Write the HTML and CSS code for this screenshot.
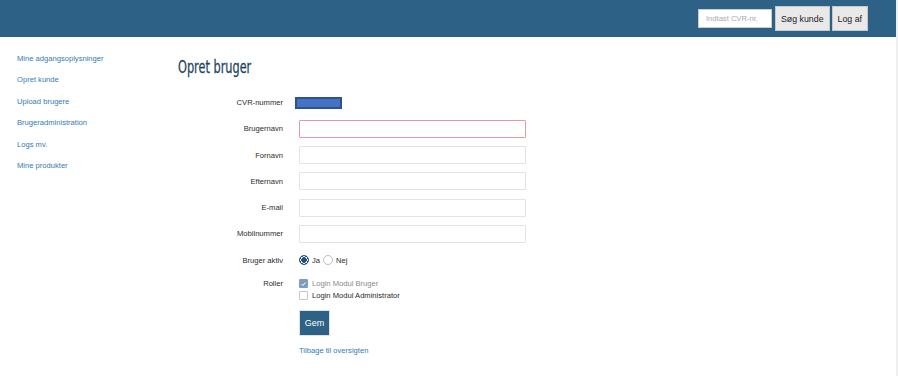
FILE: index.html
```html
<!DOCTYPE html>
<html lang="da">
<head>
<meta charset="utf-8">
<title>Opret bruger</title>
<link rel="stylesheet" href="styles.css">
</head>
<body>
<header class="topbar">
  <input class="cvr-search" type="text" placeholder="Indtast CVR-nr.">
  <button class="top-btn">Søg kunde</button>
  <button class="top-btn">Log af</button>
</header>
<div class="layout">
  <nav class="sidebar">
    <a href="#">Mine adgangsoplysninger</a>
    <a href="#">Opret kunde</a>
    <a href="#">Upload brugere</a>
    <a href="#">Brugeradministration</a>
    <a href="#">Logs mv.</a>
    <a href="#">Mine produkter</a>
  </nav>
  <main class="content">
    <h1 class="title">Opret bruger</h1>
    <div class="row">
      <label class="lbl">CVR-nummer</label>
      <div class="field"><span class="cvr-value"></span></div>
    </div>
    <div class="row">
      <label class="lbl">Brugernavn</label>
      <div class="field"><input class="txt txt-error" type="text"></div>
    </div>
    <div class="row">
      <label class="lbl">Fornavn</label>
      <div class="field"><input class="txt" type="text"></div>
    </div>
    <div class="row">
      <label class="lbl">Efternavn</label>
      <div class="field"><input class="txt" type="text"></div>
    </div>
    <div class="row">
      <label class="lbl">E-mail</label>
      <div class="field"><input class="txt" type="text"></div>
    </div>
    <div class="row">
      <label class="lbl">Mobilnummer</label>
      <div class="field"><input class="txt" type="text"></div>
    </div>
    <div class="row">
      <label class="lbl">Bruger aktiv</label>
      <div class="field radios">
        <span class="radio checked"></span><span class="opt">Ja</span>
        <span class="radio"></span><span class="opt">Nej</span>
      </div>
    </div>
    <div class="row row-roles">
      <label class="lbl lbl-top">Roller</label>
      <div class="field roles">
        <div class="role disabled"><span class="check checked"><svg viewBox="0 0 10 10" width="10" height="10"><path d="M2.3 5.2 L4.2 7.1 L7.8 2.9" fill="none" stroke="#fff" stroke-width="1.4"/></svg></span><span>Login Modul Bruger</span></div>
        <div class="role"><span class="check"></span><span>Login Modul Administrator</span></div>
      </div>
    </div>
    <div class="actions">
      <button class="save">Gem</button>
      <a href="#" class="back">Tilbage til oversigten</a>
    </div>
  </main>
</div>
</body>
</html>
```

FILE: styles.css
```css
html {
  background: #efefef;
}
body {
  margin: 0 2px 0 0;
  background: #fff;
  min-height: 376px;
  font-family: "Liberation Sans", Arial, sans-serif;
  font-size: 7.6px;
  color: #2b2b2b;
}
.topbar {
  height: 37px;
  background: #2d6185;
  display: flex;
  align-items: center;
  justify-content: flex-end;
  padding-right: 28px;
  gap: 2px;
}
.cvr-search {
  width: 74px;
  height: 19px;
  box-sizing: border-box;
  border: 1px solid #ccc;
  background: #fff;
  padding: 0 7px;
  margin-right: 1px;
  font-family: "Liberation Sans", Arial, sans-serif;
  font-size: 7.6px;
  color: #555;
}
.cvr-search::placeholder {
  color: #aaa;
}
.top-btn {
  height: 25px;
  box-sizing: border-box;
  border: 1px solid #c8c8c8;
  background: #e9e9e9;
  color: #222;
  font-family: "Liberation Sans", Arial, sans-serif;
  font-size: 8.8px;
  padding: 0 5px;
}
.layout {
  display: flex;
}
.sidebar {
  width: 161px;
  box-sizing: border-box;
  padding: 11px 0 0 17px;
  display: flex;
  flex-direction: column;
}
.sidebar a {
  color: #337ab7;
  text-decoration: none;
  line-height: 21.4px;
}
.content {
  padding-top: 16px;
  padding-left: 17px;
  flex: 1;
}
.title {
  margin: 0 0 12.5px 0;
  font-family: "DejaVu Sans Condensed", "DejaVu Sans", sans-serif;
  font-weight: normal;
  font-size: 18.5px;
  line-height: 28px;
  color: #1c455c;
  transform: scaleX(0.68);
  transform-origin: left center;
  -webkit-text-stroke: 0.3px #1c455c;
}
.row {
  display: flex;
  align-items: center;
  height: 18px;
  margin-bottom: 8.3px;
}
.lbl {
  width: 105px;
  text-align: right;
  margin-right: 16px;
}
.field {
  display: flex;
  align-items: center;
}
.cvr-value {
  display: block;
  width: 47px;
  height: 12px;
  box-sizing: border-box;
  background: #4472c4;
  border: 2px solid #2f528f;
  margin-left: -4px;
}
.txt {
  width: 227px;
  height: 18px;
  box-sizing: border-box;
  border: 1px solid #e3e3e3;
  border-radius: 1px;
  background: #fff;
  margin: 0;
  padding: 0 6px;
}
.txt-error {
  border-color: #e39aa4;
}
.radio {
  width: 10px;
  height: 10px;
  box-sizing: border-box;
  border-radius: 50%;
  border: 1px solid #bdbdbd;
  background: #fff;
  display: inline-block;
}
.radio.checked {
  border: 1px solid #1f4f7a;
  background: radial-gradient(circle, #1f4f7a 0 2.6px, #fff 3px 3.6px, #1f4f7a 3.8px);
}
.opt {
  margin-left: 3px;
  margin-right: 3px;
}
.row-roles {
  height: auto;
  align-items: flex-start;
  margin-bottom: 8px;
}
.lbl-top {
  line-height: 12px;
}
.roles {
  flex-direction: column;
  align-items: flex-start;
}
.role {
  display: flex;
  align-items: center;
  height: 12px;
  gap: 4px;
}
.role.disabled {
  color: #8a8a8a;
}
.check {
  width: 9px;
  height: 9px;
  box-sizing: border-box;
  border: 1px solid #c6c6c6;
  border-radius: 1px;
  background: #fff;
  display: inline-flex;
  align-items: center;
  justify-content: center;
}
.check svg {
  display: block;
}
.check.checked {
  background: #7d9fbf;
  border-color: #7d9fbf;
}
.actions {
  padding-left: 121px;
  display: flex;
  flex-direction: column;
  align-items: flex-start;
}
.save {
  width: 31px;
  height: 26px;
  border: 1px solid #dce4ea;
  background: #2d6185;
  color: #fff;
  font-family: "Liberation Sans", Arial, sans-serif;
  font-size: 9px;
  padding: 0;
  margin-bottom: 9px;
}
.back {
  color: #337ab7;
  text-decoration: none;
  line-height: 12px;
}
```
